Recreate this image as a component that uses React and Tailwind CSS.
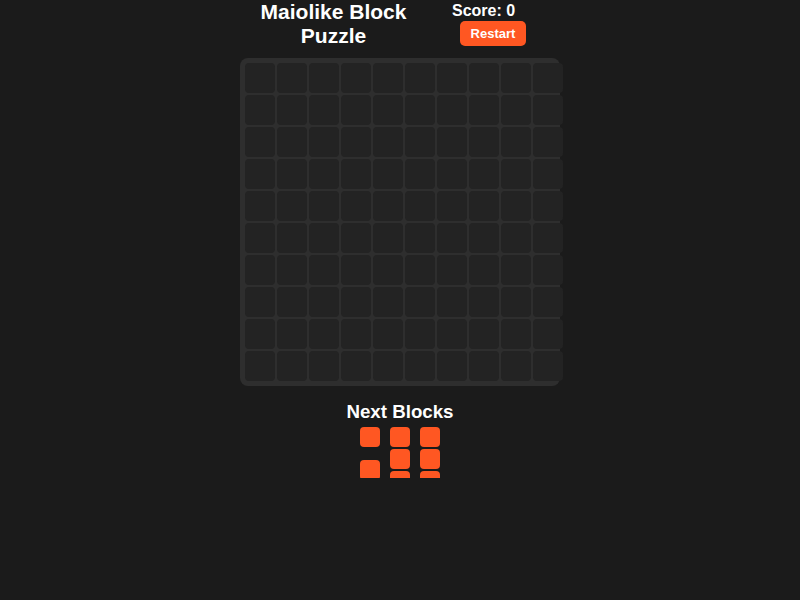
import React from 'react';

const ROWS = 10;
const COLS = 10;

function Cell() {
  return <div className="h-[30px] w-[30px] rounded-[4px] bg-[#232323]" />;
}

function Block({ className = '' }) {
  return <div className={'h-[20px] w-[20px] shrink-0 rounded-[4px] bg-[#ff5722] ' + className} />;
}

export default function App() {
  const cells = Array.from({ length: ROWS * COLS }, (_, i) => i);

  return (
    <div className="min-h-screen bg-[#1b1b1b] font-['Liberation_Sans',Arial,sans-serif] text-white">
      <div className="mx-auto flex w-[320px] flex-col items-center">
        {/* header */}
        <div className="flex w-full items-start">
          <h1 className="w-[187px] text-center text-[21px] font-bold leading-[24px]">Maiolike Block Puzzle</h1>
          <div className="ml-[25px] flex flex-col items-start">
            <div className="mt-[1px] text-[16px] font-bold leading-[20px]">Score: 0</div>
            <button className="ml-[8px] h-[25px] w-[66px] rounded-[5px] bg-[#ff5722] text-[13px] font-bold text-white">
              Restart
            </button>
          </div>
        </div>

        {/* board */}
        <div className="mt-[10px] w-[320px] rounded-[8px] bg-[#2e2e2e] p-[5px]">
          <div className="grid grid-cols-[repeat(10,30px)] gap-[2px]">
            {cells.map((i) => (
              <Cell key={i} />
            ))}
          </div>
        </div>

        <h3 className="mt-[12px] text-[18.72px] font-bold leading-normal">Next Blocks</h3>

        {/* upcoming pieces */}
        <div className="mt-[1px] flex h-[51px] items-start gap-[10px] overflow-hidden">
          <div className="flex flex-col">
            <Block />
            <Block className="mt-[13px]" />
          </div>
          <div className="flex flex-col gap-[2px]">
            <Block />
            <Block />
            <Block />
          </div>
          <div className="flex flex-col gap-[2px]">
            <Block />
            <Block />
            <Block />
          </div>
        </div>
      </div>
    </div>
  );
}
